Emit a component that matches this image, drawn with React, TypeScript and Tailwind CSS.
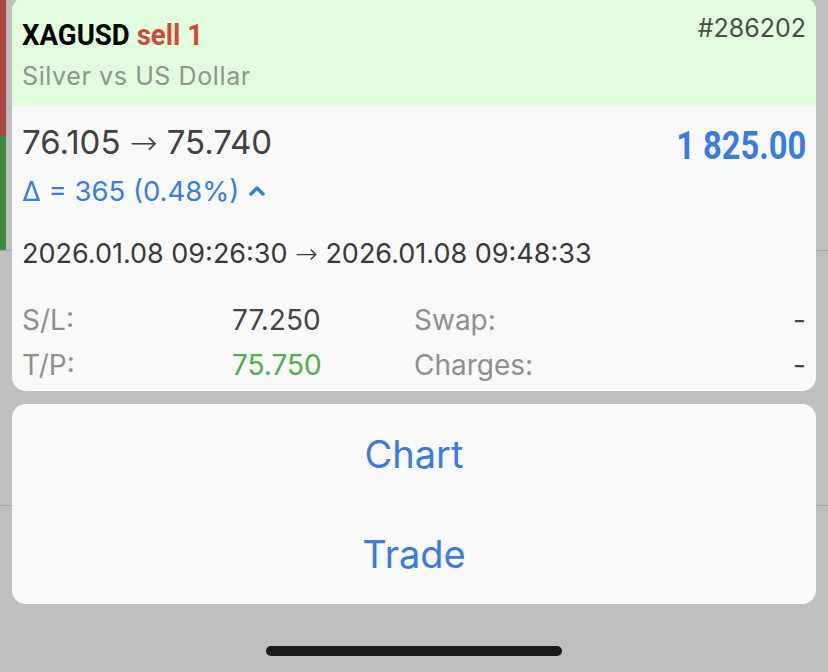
import { ChevronUp } from "lucide-react";

const condensed = "font-['Roboto',sans-serif] font-bold inline-block";

function Arrow() {
  return <span className="font-['DejaVu_Sans',sans-serif] font-light">→</span>;
}

function SideRail({ left }: { left?: boolean }) {
  return (
    <div className="w-[12px] flex flex-col shrink-0">
      {left ? (
        <>
          <div className="h-[136px] w-[6px] bg-[#a5473f]" />
          <div className="h-[114px] w-[6px] bg-[#3f8a3b]" />
        </>
      ) : (
        <div className="h-[250px]" />
      )}
      <div className="h-[255px] border-t border-[#a8a8a8]" />
      <div className="border-t border-[#a8a8a8]" />
    </div>
  );
}

export default function App() {
  return (
    <div className="w-[828px] h-[672px] bg-[#bfbfbf] flex overflow-hidden font-['Inter',sans-serif]">
      <SideRail left />

      <div className="w-[804px] flex flex-col shrink-0">
        {/* position card */}
        <div className="mt-[-3px] h-[394px] rounded-[14px] bg-[#f9f9f9] overflow-hidden flex flex-col">
          <div className="h-[109px] bg-[#e2fddd] px-[10px] flex justify-between">
            <div className="pt-[18px]">
              <div className="h-[40px] leading-[40px]">
                <span className={`${condensed} origin-left scale-x-[0.92] text-[30px] text-black whitespace-nowrap`}>
                  XAGUSD <span className="text-[#d1493a]">sell 1</span>
                </span>
              </div>
              <div className="text-[25px] tracking-[0.6px] leading-[42px] text-[#8c948c]">Silver vs US Dollar</div>
            </div>
            <div className="pt-[11px] text-[25px] leading-[40px] text-[#4a4a4a]">#286202</div>
          </div>

          <div className="px-[10px] pt-[16px]">
            <div className="flex justify-between items-start">
              <div>
                <div className="text-[33px] leading-[40px] text-[#404040]">
                  76.105 <Arrow /> 75.740
                </div>
                <div className="mt-[8px] flex items-center text-[27.5px] leading-[40px] text-[#3a7be0]">
                  <span>Δ = 365 (0.48%)</span>
                  <ChevronUp className="ml-[6px] w-[24px] h-[24px]" strokeWidth={3.5} />
                </div>
              </div>
              <div className="mt-[4px] h-[41px] leading-[41px]">
                <span className={`${condensed} origin-right scale-x-[0.86] text-[38px] text-[#3a7be0] whitespace-nowrap`}>
                  1 825.00
                </span>
              </div>
            </div>

            <div className="mt-[23px] text-[27px] leading-[40px] text-[#383838]">
              2026.01.08 09:26:30 <Arrow /> 2026.01.08 09:48:33
            </div>

            <div className="mt-[24px] grid grid-cols-2 text-[28px] leading-[45px]">
              <div className="flex">
                <span className="w-[210px] text-[#8e8e8e]">S/L:</span>
                <span className="text-[#444]">77.250</span>
              </div>
              <div className="flex justify-between">
                <span className="text-[#8e8e8e]">Swap:</span>
                <span className="text-[#444]">-</span>
              </div>
              <div className="flex">
                <span className="w-[210px] text-[#8e8e8e]">T/P:</span>
                <span className="text-[#4cae4c]">75.750</span>
              </div>
              <div className="flex justify-between">
                <span className="text-[#8e8e8e]">Charges:</span>
                <span className="text-[#444]">-</span>
              </div>
            </div>
          </div>
        </div>

        {/* action sheet */}
        <div className="mt-[13px] h-[200px] rounded-[14px] bg-[#f9f9f9] flex flex-col text-[38px] text-[#3a7be0]">
          <div className="h-[100px] flex items-center justify-center">Chart</div>
          <div className="h-[100px] flex items-center justify-center">Trade</div>
        </div>

        <div className="mt-[42px] mx-auto w-[296px] h-[10px] rounded-full bg-[#1a1a1a]" />
      </div>

      <SideRail />
    </div>
  );
}
